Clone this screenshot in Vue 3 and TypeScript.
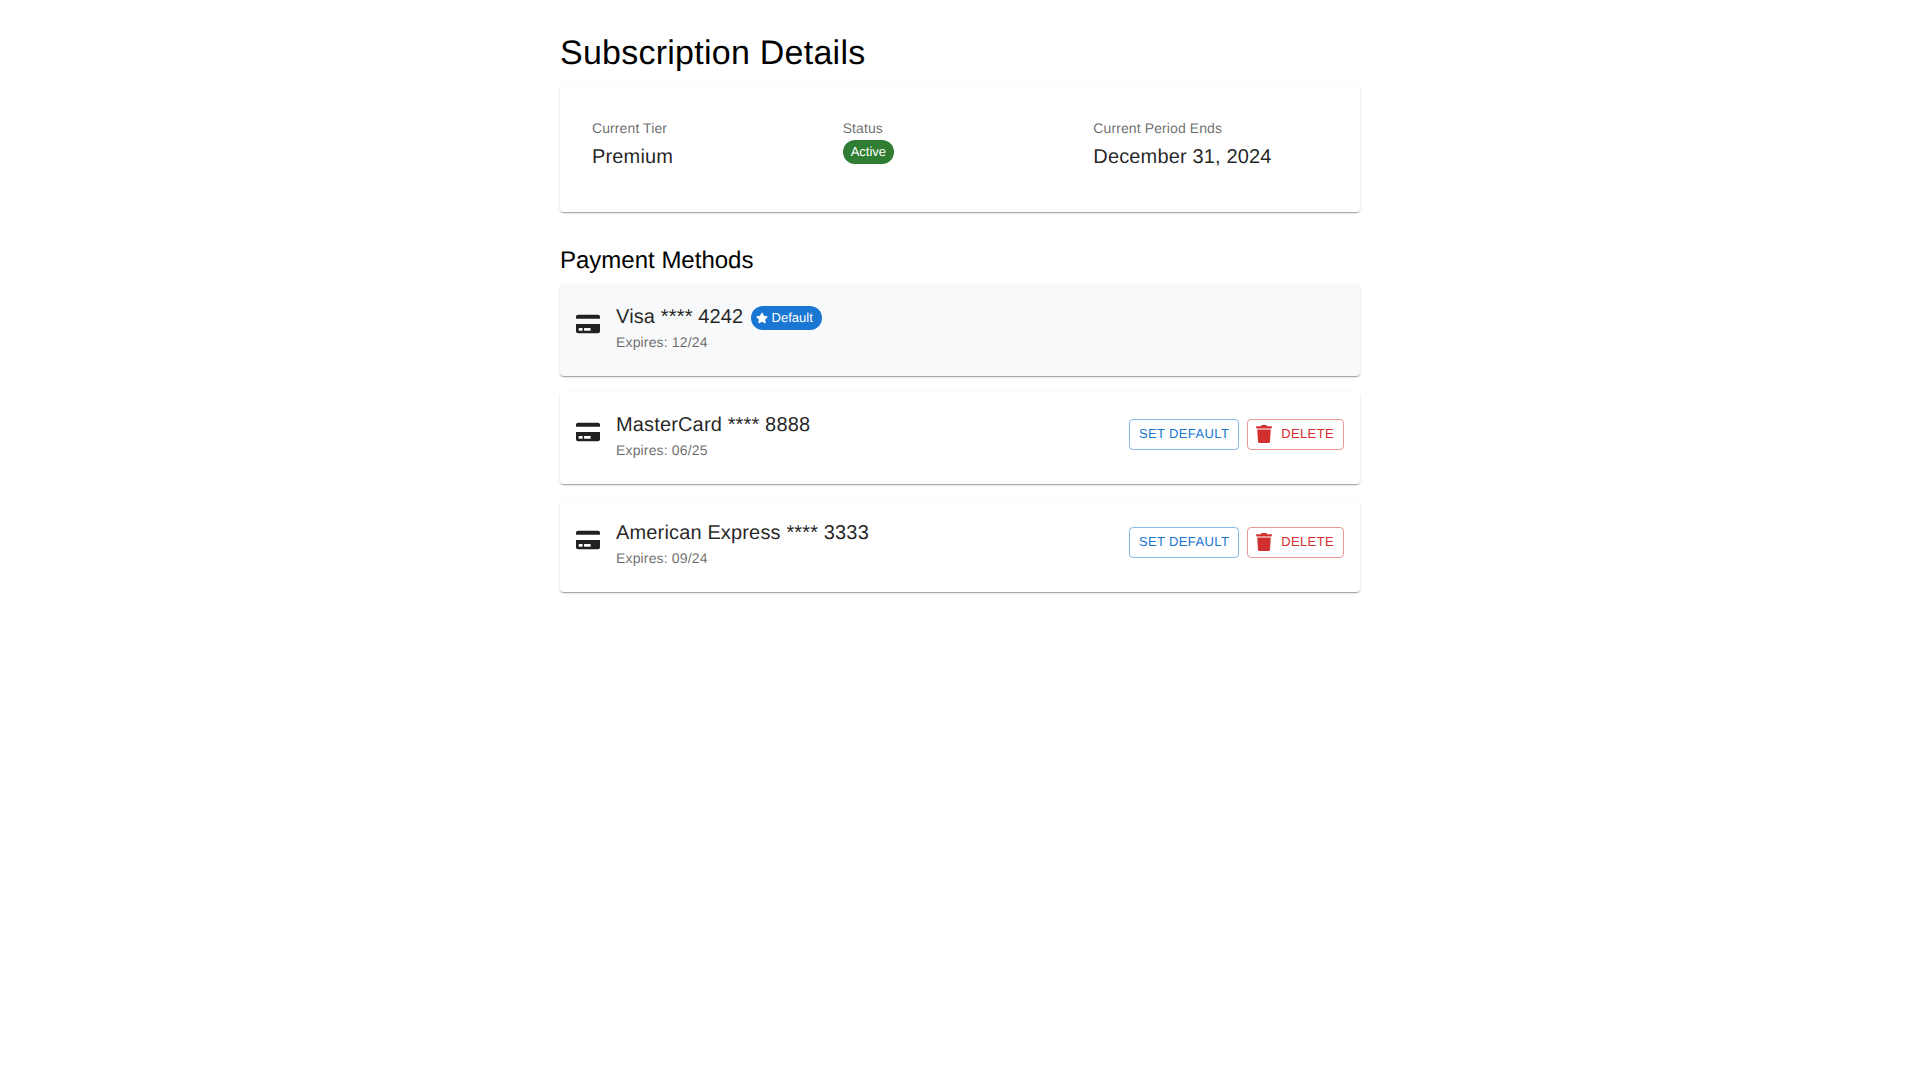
<script setup lang="ts">
interface Method {
  name: string
  expires: string
  isDefault: boolean
}

const methods: Method[] = [
  { name: 'Visa **** 4242', expires: 'Expires: 12/24', isDefault: true },
  { name: 'MasterCard **** 8888', expires: 'Expires: 06/25', isDefault: false },
  { name: 'American Express **** 3333', expires: 'Expires: 09/24', isDefault: false }
]
</script>

<template>
  <main class="page">
    <h1 class="title">Subscription Details</h1>

    <section class="card summary">
      <div class="field">
        <div class="label">Current Tier</div>
        <div class="value">Premium</div>
      </div>
      <div class="field">
        <div class="label">Status</div>
        <span class="chip chip-green">Active</span>
      </div>
      <div class="field">
        <div class="label">Current Period Ends</div>
        <div class="value">December 31, 2024</div>
      </div>
    </section>

    <h2 class="subtitle">Payment Methods</h2>

    <section
      v-for="m in methods"
      :key="m.name"
      class="card method"
      :class="{ 'method-default': m.isDefault }"
    >
      <svg class="card-icon" viewBox="0 0 576 512" aria-hidden="true">
        <path fill="currentColor" d="M0 432c0 26.5 21.5 48 48 48h480c26.5 0 48-21.5 48-48V256H0v176zm192-68c0-6.6 5.4-12 12-12h136c6.6 0 12 5.4 12 12v40c0 6.6-5.4 12-12 12H204c-6.6 0-12-5.4-12-12v-40zm-128 0c0-6.6 5.4-12 12-12h72c6.6 0 12 5.4 12 12v40c0 6.6-5.4 12-12 12H76c-6.6 0-12-5.4-12-12v-40zM576 80v48H0V80c0-26.5 21.5-48 48-48h480c26.5 0 48 21.5 48 48z" />
      </svg>
      <div class="info">
        <div class="value">
          {{ m.name }}
          <span v-if="m.isDefault" class="chip chip-blue">
            <svg class="star" viewBox="0 0 576 512" aria-hidden="true">
              <path fill="currentColor" d="M259.3 17.8L194 150.2 47.9 171.5c-26.2 3.8-36.7 36.1-17.7 54.6l105.7 103-25 145.5c-4.5 26.3 23.2 46 46.4 33.7L288 439.6l130.7 68.7c23.2 12.2 50.9-7.4 46.4-33.7l-25-145.5 105.7-103c19-18.5 8.5-50.8-17.7-54.6L382 150.2 316.7 17.8c-11.7-23.6-45.6-23.9-57.4 0z" />
            </svg>
            Default
          </span>
        </div>
        <div class="label">{{ m.expires }}</div>
      </div>
      <div v-if="!m.isDefault" class="actions">
        <button class="btn btn-blue" type="button">Set Default</button>
        <button class="btn btn-red" type="button">
          <svg class="trash" viewBox="0 0 448 512" aria-hidden="true">
            <path fill="currentColor" d="M432 32H312l-9.4-18.7A24 24 0 0 0 281.1 0H166.8a23.72 23.72 0 0 0-21.4 13.3L136 32H16A16 16 0 0 0 0 48v32a16 16 0 0 0 16 16h416a16 16 0 0 0 16-16V48a16 16 0 0 0-16-16zM53.2 467a48 48 0 0 0 47.9 45h245.8a48 48 0 0 0 47.9-45L416 128H32z" />
          </svg>
          <span class="btn-text">Delete</span>
        </button>
      </div>
    </section>
  </main>
</template>

<style scoped>
.page {
  box-sizing: border-box;
  width: 800px;
  margin: 0 auto;
  padding-top: 32px;
  font-family: "Liberation Sans", Arial, sans-serif;
  color: rgba(0, 0, 0, 0.87);
  text-rendering: geometricPrecision;
}
.title {
  margin: 0 0 12px;
  font-size: 34px;
  font-weight: 400;
  line-height: 42px;
  letter-spacing: 0.25px;
  color: #000;
}
.subtitle {
  margin: 32px 0 7px;
  padding-top: 1px;
  font-size: 24px;
  font-weight: 400;
  line-height: 32px;
  color: #000;
}
.card {
  background: #fff;
  border-radius: 4px;
  box-shadow: 0 2px 1px -1px rgba(0, 0, 0, 0.2), 0 1px 1px 0 rgba(0, 0, 0, 0.14), 0 1px 3px 0 rgba(0, 0, 0, 0.12);
}
.summary {
  display: grid;
  grid-template-columns: repeat(3, 1fr);
  padding: 32px 16px 40px 32px;
}
.label {
  font-size: 14px;
  line-height: 20px;
  letter-spacing: 0.15px;
  color: rgba(0, 0, 0, 0.6);
}
.summary .label {
  margin-bottom: 2px;
  letter-spacing: 0.1px;
}
.value {
  padding-top: 1px;
  margin-bottom: -1px;
  font-size: 20px;
  line-height: 32px;
  letter-spacing: 0.15px;
}
.chip {
  display: inline-flex;
  align-items: center;
  box-sizing: border-box;
  height: 24px;
  padding: 0 8px 1px;
  border-radius: 12px;
  font-size: 13px;
  letter-spacing: 0;
  color: #fff;
}
.chip-green {
  background: #2e7d32;
}
.chip-blue {
  background: #1976d2;
  padding: 0 9px 1px 5px;
  margin-left: 2px;
  vertical-align: -1px;
}
.star {
  width: 12px;
  height: 12px;
  margin: 1px 3.5px 0 0;
}
.method {
  display: flex;
  align-items: center;
  padding: 16px 16px 24px;
  margin-bottom: 16px;
}
.method-default {
  background: #f8f9fa;
}
.card-icon {
  flex: none;
  width: 24px;
  height: 22px;
  margin: 0 16px 5px 0;
  color: #212121;
}
.info {
  flex: 1;
  min-width: 0;
}
.actions {
  display: flex;
  gap: 8px;
}
.btn {
  display: inline-flex;
  align-items: center;
  box-sizing: border-box;
  height: 31px;
  padding: 0 9px 2px;
  background: transparent;
  border: 1px solid;
  border-radius: 4px;
  font-family: inherit;
  font-size: 13px;
  letter-spacing: 0.37px;
  text-transform: uppercase;
  text-rendering: geometricPrecision;
}
.btn-blue {
  color: #1976d2;
  border-color: rgba(25, 118, 210, 0.5);
}
.btn-red {
  color: #d32f2f;
  border-color: rgba(211, 47, 47, 0.5);
}
.trash {
  width: 16px;
  height: 18px;
  margin: 1px 9px 0 -1px;
}
</style>
